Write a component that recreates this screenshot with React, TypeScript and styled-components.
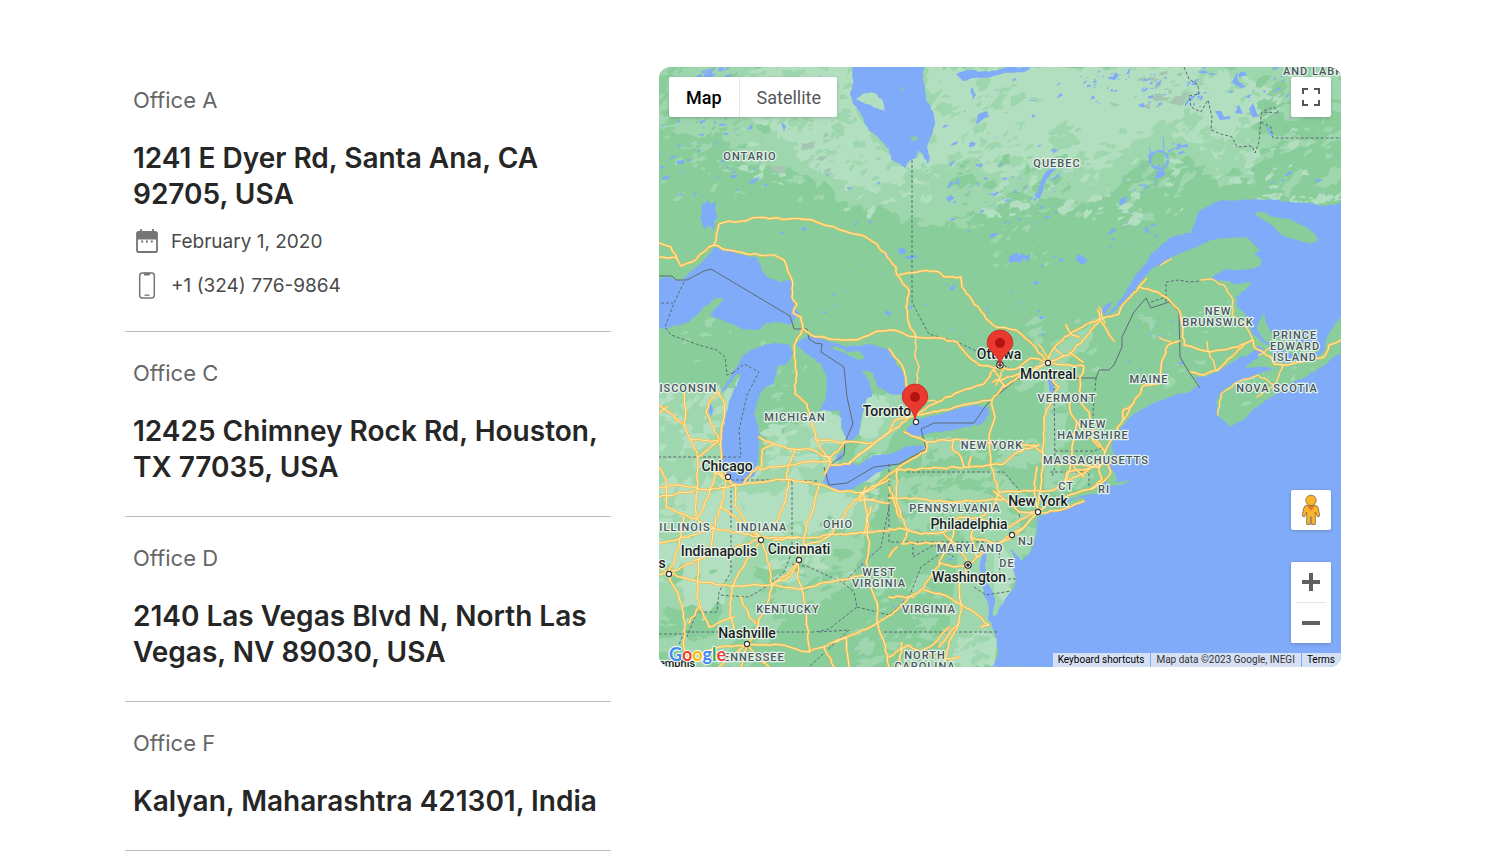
import React from "react";
import styled, { createGlobalStyle } from "styled-components";

const GlobalStyle = createGlobalStyle`
  *, *::before, *::after { box-sizing: border-box; }
  body {
    margin: 0;
    background: #fff;
    font-family: Inter, "Liberation Sans", sans-serif;
    color: #262626;
  }
`;

/* ---------- page layout ---------- */

const Page = styled.main`
  display: grid;
  grid-template-columns: minmax(0, 486fr) minmax(0, 682fr);
  align-items: start;
  gap: 48px;
  padding: 59px 148px 16px 125px;
`;

const OfficeList = styled.ul`
  list-style: none;
  margin: 0;
  padding: 0;
`;

const OfficeItem = styled.li`
  padding: 25px 8px 31px;
  border-bottom: 1px solid #bdbdbd;
`;

const OfficeName = styled.p`
  margin: 0 0 24px;
  font-size: 22px;
  line-height: 32px;
  font-weight: 400;
  color: #666;
`;

const Address = styled.h2`
  margin: 0;
  font-size: 28px;
  line-height: 36px;
  font-weight: 600;
  color: #262626;
`;

const Detail = styled.div`
  display: flex;
  align-items: center;
  gap: 10px;
  height: 28px;
  margin-top: 16px;
  font-size: 19px;
  line-height: 28px;
  color: #4a4a4a;

  svg { flex: none; }
`;

/* ---------- map chrome ---------- */

const MapFrame = styled.section`
  position: relative;
  height: 600px;
  margin-top: 8px;
  overflow: hidden;
  border-radius: 12px;
  background: #80abf8;
  font-family: Roboto, "Liberation Sans", sans-serif;
`;

const MapSvg = styled.svg`
  display: block;
  width: 100%;
  height: 100%;
`;

const Corner = styled.div<{ $side: "left" | "right" }>`
  position: absolute;
  top: 10px;
  ${(p) => p.$side}: 10px;
`;

const TypeSwitch = styled.div`
  display: flex;
  border-radius: 2px;
  background: #fff;
  box-shadow: 0 1px 4px -1px rgba(0, 0, 0, 0.3);
`;

const TypeButton = styled.button<{ $active?: boolean }>`
  height: 40px;
  padding: 2px 17px 0;
  border: 0;
  background: none;
  font: ${(p) => (p.$active ? 500 : 400)} 18px/38px Roboto, sans-serif;
  color: ${(p) => (p.$active ? "#000" : "#565656")};

  & + & {
    padding-right: 16px;
    border-left: 1px solid #e8e8e8;
  }
`;

const SquareButton = styled.button`
  display: flex;
  align-items: center;
  justify-content: center;
  width: 40px;
  height: 40px;
  padding: 0;
  border: 0;
  border-radius: 2px;
  background: #fff;
`;

const RightStack = styled.div`
  position: absolute;
  right: 10px;
  bottom: 24px;
  display: flex;
  flex-direction: column;
  gap: 32px;

  & > * { box-shadow: 0 1px 4px -1px rgba(0, 0, 0, 0.3); }
`;

const ZoomGroup = styled.div`
  display: flex;
  flex-direction: column;
  align-items: center;
  border-radius: 2px;
  background: #fff;
`;

const ZoomDivider = styled.span`
  width: 30px;
  height: 1px;
  background: #e6e6e6;
`;

const Shadowed = styled(SquareButton)`
  box-shadow: 0 1px 4px -1px rgba(0, 0, 0, 0.3);
`;

const Attribution = styled.div`
  position: absolute;
  right: 0;
  bottom: 0;
  display: flex;
  gap: 1px;
  height: 14px;
  font-size: 10px;
  line-height: 14px;
  color: #333;

  & > * {
    padding: 0 6px 0 5px;
    border: 0;
    background: rgba(235, 238, 243, 0.8);
    font: inherit;
    white-space: nowrap;
  }
  & > button, & > a { color: #000; text-decoration: none; }
`;

const GoogleLogo = styled.a`
  position: absolute;
  left: 10px;
  bottom: 1px;
  font: 700 18px/24px Lato, sans-serif;
  text-decoration: none;
  text-shadow: 0 0 1px #fff, 1px 0 1px #fff, -1px 0 1px #fff, 0 1px 1px #fff, 0 -1px 1px #fff;
`;

const Letter = styled.span<{ $color: string }>`
  color: ${(p) => p.$color};
`;

/* ---------- icons ---------- */

const CalendarIcon = () => (
  <svg width="28" height="28" viewBox="0 0 28 28" fill="none" aria-hidden="true">
    <path d="M4 4.5h20v7H4z" fill="#757575" />
    <rect x="4" y="4" width="20" height="20" rx="1.6" stroke="#757575" strokeWidth="1.8" />
    <path d="M8 1v4M20 1v4" stroke="#757575" strokeWidth="1.8" />
    <path d="M8.2 12.4h2v2h-2zM13 12.4h2v2h-2zM17.8 12.4h2v2h-2z" fill="#757575" />
  </svg>
);

const PhoneIcon = () => (
  <svg width="28" height="28" viewBox="0 0 28 28" fill="none" aria-hidden="true">
    <rect x="6.7" y=".9" width="14.6" height="25" rx="2.6" stroke="#757575" strokeWidth="1.5" />
    <path d="M10.5 .7h7l-.8 2.7h-5.4z" fill="#757575" />
    <path d="M11.5 23.2h5" stroke="#757575" strokeWidth="1.3" />
  </svg>
);

const FullscreenIcon = () => (
  <svg width="18" height="18" viewBox="0 0 18 18" aria-hidden="true">
    <path d="M0 0v6h2V2h4V0zm16 0h-4v2h4v4h2V0zm0 16h-4v2h6v-6h-2zM2 12H0v6h6v-2H2z" fill="#565656" />
  </svg>
);

const PlusIcon = () => (
  <svg width="18" height="18" viewBox="0 0 18 18" aria-hidden="true">
    <path d="M18 7h-7V0H7v7H0v4h7v7h4v-7h7z" fill="#606060" />
  </svg>
);

const MinusIcon = () => (
  <svg width="18" height="18" viewBox="0 0 18 18" aria-hidden="true">
    <path d="M0 7h18v4H0z" fill="#606060" />
  </svg>
);

const PegmanIcon = () => (
  <svg width="20" height="32" viewBox="0 0 20 32" aria-hidden="true">
    <path
      d="M6 11.2Q3.4 11.4 2.8 14L1.2 22l2.2.9L5.7 18v12.4h3.7V23h1.2v7.4h3.7V18l2.3 4.9 2.2-.9-1.6-8Q16.6 11.4 14 11.2z"
      fill="#fbb42a"
      stroke="#7a6a42"
      strokeWidth=".8"
    />
    <path d="M5.6 11.3h8.8L10 16.8z" fill="#e07a2b" />
    <circle cx="10" cy="6.4" r="5.2" fill="#fbb42a" stroke="#7a6a42" strokeWidth=".8" />
  </svg>
);

/* ---------- map data, in map units (682 x 600) ---------- */

const GREEN = "#89cd9b";
const MID = "#9ed7ae";
const LIGHT = "#b3dfc1";
const GREY = "#a5c4b2";
const WATER = "#80abf8";

const midLand = [
  "M0 40L20 0H600L682 0V50L620 60 600 85 560 112 530 90 500 85 470 100 452 125 420 138 395 130 360 125 330 145 300 150 280 160 245 152 225 140 190 140 170 118 130 100 90 98 60 70 20 70 0 60z",
  "M0 318L60 320 72 330 62 400 100 405 108 370 160 345 187 375 165 410 205 430 225 430 205 480 190 520 150 540 120 560 90 600 0 600z",
  "M205 330L245 325 250 352 225 385 190 395 205 365z",
  "M232 412L340 402 372 440 350 475 270 470 240 455z",
  "M300 480L380 460 340 550 335 600H240L290 560z",
  "M355 320L388 290 440 250 430 275 405 298 360 325z",
  "M265 372L380 376 385 400 300 390 262 400z",
  "M385 300L410 296 410 400 436 412 405 425 385 420z",
];

const lightLand = [
  "M90 0H195L200 50 232 95 250 104 262 85 274 60 266 20V0H560L590 12 622 22 618 45 596 58 570 72 556 92 540 76 505 66 480 72 455 92 430 118 405 112 400 92 370 100 345 105 315 100 285 105 270 118 240 112 216 120 190 116 150 100 135 80 110 60 90 52 75 30z",
  "M20 415L55 425 70 420 95 450 70 500 60 560 30 560 20 520 10 505 35 470z",
  "M77 425L125 425 135 400 150 420 150 440 115 470 100 470z",
  "M140 350L178 343 184 365 187 375 160 372z",
  "M207 330L228 330 230 350 208 372 200 368z",
  "M0 470L40 480 30 500 0 500z",
  "M335 480L348 485 355 515 345 535 335 525z",
  "M300 570L325 560 338 580 334 600H290z",
  "M130 425L200 435 180 460 150 470z",
  "M62 340L80 310 75 330 66 362z",
];

const atlantic =
  "M682 136L667 139 650 136 615 133 590 133 562 133 552 138 540 144 536 155 532 166 512 170 500 180 492 187 487 197 478 206 468 222 458 238 446 248 452 246 462 238 474 224 488 207 497 199 515 189 530 183 552 173 575 170 590 172 598 180 601 184 595 187 602 192 601 199 594 202 580 203 565 203 555 208 552 213 566 214 580 217 594 214 588 221 577 229 578 240 586 247 590 258 594 267 601 273 612 281 614 288 625 296 640 294 655 292 666 282 668 270 675 258 682 250V287L674 290 666 298 646 310 628 318 612 330 598 340 586 352 574 358 571 360 567 355 560 350 558 345 558 333 563 325 575 317 592 310 605 304 618 302 604 300 586 300 600 289 606 283 600 279 590 287 572 296 560 304 548 309 536 310 541 318 532 324 516 328 502 333 488 340 473 348 464 358 456 370 452 380 455 386 449 392 448 400 456 406 457 415 466 415 470 411 471 406 467 403 471 407 470 414 462 418 452 419 446 414 446 424 437 427 428 428 412 432 400 433 385 441 428 430 421 436 404 441 384 448 378 450 378 463 375 478 370 487 362 494 355 485 351 481 355 492 354 502 357 512 355 522 348 530 342 538 338 548 334 549 336 535 334 525 328 515 326 500 328 488 324 484 321 498 322 514 325 528 330 540 329 550 334 562 338 573 339 587 333 600H682z";

const lakes = [
  "M193 0L194 12 193 22 191 28 195 38 201 45 205 55 210 64 218 69 225 76 230 82 232 92 236 95 246 101 250 94 257 91 259 83 264 88 268 97 271 90 268 80 273 68 276 58 275 50 272 42 267 30 266 20 264 12 265 0z",
  "M0 212L10 210 22 214 30 206 40 198 48 190 56 181 70 183 83 188 98 191 102 200 108 210 120 215 133 213 134 233 140 248 134 256 130 258 120 255 108 256 98 263 83 262 75 258 60 252 50 248 57 240 66 232 58 231 48 238 38 248 28 256 18 258 5 262 0 260z",
  "M60 328L67 318 72 309 80 296 84 288 100 279 118 276 130 278 134 287 128 297 118 300 115 316 106 320 100 330 95 347 100 360 100 373 98 400 95 409 85 416 75 417 68 408 63 398 63 367 67 347 72 330 82 307 78 307 67 322z",
  "M136 277L147 287 163 297 167 310 167 333 160 343 180 343 185 367 187 375 193 373 200 367 203 347 207 333 213 330 210 313 203 303 213 305 217 317 230 327 243 328 247 323 245 307 237 297 230 283 213 277 187 280 163 272 152 267z",
  "M178 388L184 384 184 392 177 394z",
  "M170 400L190 394 200 398 215 388 230 387 245 380 262 378 266 380 258 386 240 396 225 402 210 412 195 422 180 424 170 420 163 415 168 405z",
  "M247 365L255 352 280 348 303 340 315 338 330 340 330 347 323 357 297 362 263 368 248 369z",
  "M42 136L45 138 48 133 52 137 57 135 56 143 59 150 55 154 55 163 50 158 45 162 41 152 43 145z",
  "M49 339l3-2 2 4-1 8-3-3z",
  "M297 7L310 3 330 5 345 1 372 0 365 5 345 6 335 9 315 11 304 14z",
  "M314 20L317 28 313 34 312 22zM319 47L328 44 330 50 322 54 317 58z",
  "M376 130L382 114 388 104 400 98 391 108 384 119 381 132zM390 116L405 101 399 110z",
  "M418 187l6 2 5 5-6 4-6-5zM239 184a4 3 0 1 0 8 0 4 3 0 1 0-8 0M245 190l9-2 5 2-10 2z",
  "M350 190l8-5 2 4 3-3 3 3 6-2-3 8-4-4-4 5-5-2-6 2z",
  "M573 15l5-10 1 9 8 6-5 1-7-4z M556 44l6 0 3 6 6-1 0 3-10 1z M576 46l4-8 4 9zM590 42l4-6 5 13-5 2z",
  "M122 55l5 4-2 6zM668 250l10-14 4-4v6l-10 14z",
  "M390 301l4 10 1 22-3 0-3-20zM440 245l8-8 6-2-8 12z",
  "M606 58l5 4 3 8-2-1z",
];

const islands = [
  "M197 32L205 26 215 26 223 32 227 44 218 41 207 37z",
  "M241 22l3-3 0 5zM251 71l7-3 0 5-5 1z",
  "M595 147L603 145 612 149 630 152 645 159 655 166 659 173 653 176 635 172 620 166 614 159z",
  "M163 279L170 281 178 279 190 285 200 284 206 290 202 293 190 289 180 284z",
  "M598 262l2-7 5-9 2 10 4 8 6 6 14 2 14 4 12 2 4 6-14 5-18-3-14-7-10-6z",
];

const roads = [
  "M55 178L58 165 60 157 70 154 87 154 93 151 115 151 153 153 170 159 195 167 205 169 218 177 228 190 237 200 238 208 250 223 247 240 250 257 257 270",
  "M0 176L12 180 17 188 18 192 22 199 33 195 45 185 50 180 55 178 68 183 80 185 100 188 115 188 125 193 128 200 133 213 133 230 138 237 134 246 142 250 144 262 152 268 170 272 197 273 220 264 230 263 257 270 280 271 298 275 310 290 320 298 337 301 357 302 372 291 388 295",
  "M0 190L18 191",
  "M240 208L263 204 280 205 285 210 302 210 303 220 313 233 327 252 337 260 357 263 373 277 383 288 388 295",
  "M388 295L397 278 413 265 440 252 460 247 462 240 480 220 487 212",
  "M388 295L410 288 427 270 441 253 455 274M439 243L441 253M407 258L413 268 420 270",
  "M480 220L499 225 510 233 520 243 524 260 525 278 542 283 552 285 579 280 594 273 595 280 612 290 615 297 624 298 639 295 665 290 670 278 682 273",
  "M532 305L545 308 559 303 569 292 585 278",
  "M520 274L509 278 502 300 499 317 485 318 474 337 464 353 452 373 446 385 440 400M474 337L464 343 464 353",
  "M250 350L283 343 310 337 333 333 343 320 363 307 387 297",
  "M255 348L275 337 300 325 325 317 335 302M335 302L345 320M334 315L365 306 385 297",
  "M388 295L405 298 425 299 424 306 421 310 422 335 430 345 435 370 446 385M410 285L424 295",
  "M230 282L245 303 247 315 248 335 250 350",
  "M250 350L240 360 228 367 213 378 200 388 190 397 172 398M250 350L236 353 230 365 204 385 190 396",
  "M245 365L260 371 268 375 298 372 320 375 350 377 375 378 383 385 386 396 420 397 440 400",
  "M268 375L267 385 253 392 238 402 225 412 205 425",
  "M333 333L336 350 331 365 330 378 332 400 340 425 335 440 320 452",
  "M295 372L293 382 302 390 305 400M380 378L358 385 345 397 310 400 280 401 238 403",
  "M393 312L400 320 392 335 385 350 384 380 384 400 380 430 378 445",
  "M411 335L412 347 418 355 413 380 411 400 405 420M418 355L440 380",
  "M143 263L135 280 137 303 136 327 148 337 157 373 172 395",
  "M100 370L115 377 133 382 150 382 172 392M157 373L187 375 213 376M102 400L103 383 115 376M100 402L130 398 150 395 172 395 165 408M136 383L129 398 128 412M165 389L172 390 187 374",
  "M60 325L66 337 62 373 62 395 68 410M60 325L50 335 47 345 52 357 60 372",
  "M0 338L10 345 25 358 31 372 38 385 39 400 38 425 37 450M31 372L60 374 39 390M26 325L26 358M0 346L8 340",
  "M60 400L62 410 75 418 100 415 130 412 160 417 178 424 205 425 230 412",
  "M60 402L67 412 62 440 54 461 50 490M58 396L55 412 45 440 38 452M0 420L20 418 50 423 75 418M0 400L7 412 7 440 25 447 38 452",
  "M76 417L77 440 90 460 102 472M55 405L72 414M85 416L98 400",
  "M38 452L54 461 102 470 150 471 173 467 205 466 230 464M0 476L20 472 54 461",
  "M102 472L70 482 40 492 10 506 0 508M0 500L10 506 20 480 25 450",
  "M10 506L40 515 75 519 112 518 138 522 160 517 190 512 205 508",
  "M102 472L108 490 113 518 108 540 100 552 93 572 88 577M102 472L90 490 80 505 73 520 71 545 75 562M82 530L90 550 97 556",
  "M130 412L126 435 117 455M160 417L155 440 148 455 145 478 140 493 138 510 143 523 147 545 150 585M140 493L130 506 113 518",
  "M205 425L190 440 173 467 160 475 145 478M205 425L208 450 210 480 207 495 212 520 218 535 218 555 225 575 230 600M205 432L230 436M207 420L200 434 215 432",
  "M88 577L60 580 30 590 0 598M88 577L120 578 150 585 175 575 200 565 225 552 235 545 250 530 262 523 275 505 290 480 297 460",
  "M10 510L20 530 26 555 25 580 30 595M40 492L38 530 45 550 50 560 75 550M88 577L82 600M88 577L98 590 110 600M60 600L75 588 88 577M165 580L175 600M175 575L187 570 190 600M40 540L30 556",
  "M230 431L260 432 290 435 330 433 345 432 360 445 378 445M230 462L245 462 262 467 285 465 300 450 320 452 350 460 380 443",
  "M238 403L237 430 242 450 248 462M230 420L240 450M250 462L243 477 255 476 300 477",
  "M380 443L365 460 352 468 335 478 318 490 309 498 300 520 302 537 300 555 290 575 285 600M378 445L362 463 350 472 330 480",
  "M302 537L315 545 330 558 322 560M265 523L285 528 302 537M309 498L295 500 280 496M230 530L255 530M312 470L318 490M285 467L300 480 309 498M318 455L312 470 335 476",
  "M230 590L250 578 262 585 275 577 290 560M243 576L240 600M262 585L290 592 300 590M300 555L280 580",
  "M380 443L400 432 420 425 432 422 445 414 452 405 447 395M405 420L408 405 440 400 450 393M370 424L390 424 408 415 430 402M440 400L443 412 432 422",
  "M383 446L405 442 425 434M378 400L375 424 378 440M340 425L370 424M345 432L335 424M310 400L312 390M238 480L230 490M415 400L425 410M430 395L450 397",
  "M112 518L130 510 140 493M0 430L35 424M115 473L140 470M62 440L102 470M205 466L212 440",
];

const minorRoads = [
  "M542 213L552 212 565 218 574 233 573 248 587 260 594 273",
  "M624 298L617 318 599 308 579 315 562 327 559 348M550 285L557 303M612 280L600 288M617 318L598 330",
  "M257 270L256 290 260 300 257 320 265 333 278 335M548 275L549 284M502 198L512 192",
  "M500 270L512 275M380 278L388 290M405 290L395 280M345 302L337 318M440 240L446 256",
];

const borders =
  "M0 209L13 209 17 213 28 213 45 204 52 202 131 249 135 262 148 262 150 272 156 276 163 277 162 285 185 300 188 330 194 357 186 375 185 388 172 397M165 400L170 418 188 416 215 400 240 397 267 382 262 362 275 356 315 356 328 337 358 312 388 311 437 311 440 303 450 303 455 298 463 280 463 270 475 245 487 231 492 241 510 235 520 245 521 290 530 305 541 321";

const stateLines = [
  "M253 93V235L258 245 270 267 298 275 330 290 350 301",
  "M25 215L15 236 6 260 12 268 40 278 58 283 66 290 68 308 74 306M2 236H14M74 306L85 297 100 305 88 328 80 363 82 390H0",
  "M72 418V505L60 525 58 545 38 545 28 570M72 413H130M133 415V485L125 505 110 518 90 530 60 528M130 414H160",
  "M133 497L150 500 165 507 183 515 195 525 198 540 170 562 156 565H25M230 440L222 480 200 500 185 515M198 540L230 548 250 530 262 500 290 480",
  "M230 397V475H340M248 405H345L360 423 358 440 362 455M225 565H338M25 565L20 578",
  "M437 311L434 345 435 370M395 311L396 400 393 410M396 384H435L445 380M391 405H430V425M254 475V490L275 478 295 490",
  "M340 475L341 512H357M315 520L327 528 352 524M160 565L190 563 150 600M0 567H25",
  "M525 0L530 12 539 18 540 27 530 29 532 40 542 45 549 33 553 50 552 63 562 67 573 70 578 80 593 79 596 86 600 75 602 50 603 45 620 46 615 40 604 44M602 55L612 60 614 71H682",
  "M507 235V215L520 213 530 215 542 214M492 235L507 230",
];

type Cluster = [number, number, number, number, number, number, string];

/* x, y, width, height, count, blob size, colour */
const clusters: Cluster[] = [
  [0, 0, 200, 100, 100, 7, MID],
  [0, 0, 110, 90, 60, 7, GREEN],
  [0, 90, 230, 44, 40, 5, MID],
  [80, 0, 120, 120, 40, 6, LIGHT],
  [110, 50, 120, 70, 34, 6, MID],
  [180, 90, 90, 55, 34, 7, LIGHT],
  [230, 95, 90, 65, 50, 8, MID],
  [268, 10, 110, 100, 44, 8, MID],
  [290, 60, 130, 90, 60, 8, MID],
  [300, 90, 110, 80, 40, 8, GREEN],
  [330, 80, 120, 70, 36, 7, LIGHT],
  [400, 60, 130, 60, 44, 8, MID],
  [420, 80, 110, 80, 40, 7, MID],
  [440, 85, 100, 70, 24, 6, LIGHT],
  [500, 0, 180, 80, 66, 8, MID],
  [540, 60, 140, 60, 50, 9, MID],
  [540, 60, 120, 60, 24, 6, LIGHT],
  [600, 10, 82, 60, 34, 10, GREEN],
  [450, 5, 80, 35, 20, 6, GREY],
  [100, 50, 80, 60, 8, 6, GREY],
  [580, 20, 50, 40, 8, 5, GREY],
  [600, 128, 80, 8, 24, 5, LIGHT],
  [330, 160, 60, 40, 14, 6, MID],
  [0, 320, 60, 90, 30, 9, LIGHT],
  [100, 340, 70, 60, 18, 9, LIGHT],
  [0, 400, 220, 120, 60, 11, LIGHT],
  [0, 500, 230, 100, 55, 11, GREEN],
  [140, 450, 150, 140, 75, 9, GREEN],
  [190, 520, 140, 80, 45, 8, MID],
  [240, 405, 130, 60, 42, 9, GREEN],
  [290, 480, 40, 110, 24, 7, MID],
  [270, 375, 110, 25, 24, 6, GREEN],
  [395, 310, 45, 110, 30, 6, GREEN],
  [360, 250, 80, 60, 20, 7, MID],
  [470, 230, 110, 90, 16, 5, MID],
  [570, 300, 90, 40, 10, 5, MID],
  [90, 280, 70, 70, 10, 7, MID],
  [0, 230, 120, 80, 14, 7, MID],
];

const pondClusters: Cluster[] = [
  [0, 40, 100, 90, 46, 3, WATER],
  [60, 90, 160, 40, 12, 2, WATER],
  [275, 10, 130, 90, 18, 3, WATER],
  [290, 110, 110, 60, 44, 3, WATER],
  [420, 0, 130, 40, 50, 3, WATER],
  [540, 0, 90, 40, 18, 3, WATER],
  [450, 110, 50, 70, 26, 3, WATER],
  [480, 70, 60, 40, 12, 3, WATER],
  [590, 80, 90, 50, 14, 2, WATER],
  [120, 150, 130, 100, 18, 2, WATER],
  [250, 190, 170, 90, 40, 2, WATER],
  [470, 250, 60, 60, 18, 2, WATER],
  [10, 0, 60, 14, 12, 4, WATER],
  [200, 480, 100, 80, 12, 2, WATER],
];

/* Small seeded generator, so that the terrain is the same on each render. */
const makeRandom = (seed: number) => () => {
  seed = (seed * 1664525 + 1013904223) % 4294967296;
  return seed / 4294967296;
};

const blobs = ([x, y, w, h, count, size]: Cluster, seed: number) => {
  const rnd = makeRandom(seed * 7919 + 17);
  let d = "";
  for (let i = 0; i < count; i++) {
    const cx = x + rnd() * w;
    const cy = y + rnd() * h;
    const r = size * (0.3 + rnd() * rnd() * 1.3);
    const tilt = -1 + rnd() * 1.2;
    const squash = 0.35 + rnd() * 0.5;
    for (let k = 0; k < 11; k++) {
      const a = (k / 11) * Math.PI * 2;
      const q = r * (0.4 + rnd() * 0.9);
      const px = Math.cos(a) * q * 1.3;
      const py = Math.sin(a) * q * squash;
      const qx = cx + px * Math.cos(tilt) - py * Math.sin(tilt);
      const qy = cy + px * Math.sin(tilt) + py * Math.cos(tilt);
      d += `${k ? "L" : "M"}${qx.toFixed(1)} ${qy.toFixed(1)}`;
    }
    d += "z";
  }
  return d;
};

const roughen = (d: string, step: number, amount: number) => {
  if (/[a-y]/.test(d)) return d;
  const rnd = makeRandom(d.length * 31 + 7);
  const tokens = d.match(/[MLHVz]|-?[\d.]+/g) ?? [];
  let out = "";
  let cmd = "M";
  let x = 0;
  let y = 0;
  for (let i = 0; i < tokens.length; ) {
    if (/[MLHVz]/.test(tokens[i])) {
      cmd = tokens[i++];
      if (cmd === "z") out += "z";
      continue;
    }
    const nx = cmd === "V" ? x : Number(tokens[i++]);
    const ny = cmd === "H" ? y : Number(tokens[i++]);
    if (cmd === "M") {
      out += `M${nx} ${ny}`;
      cmd = "L";
    } else {
      const n = Math.floor(Math.hypot(nx - x, ny - y) / step);
      for (let k = 1; k < n; k++) {
        const px = x + ((nx - x) * k) / n + (rnd() - 0.5) * amount;
        const py = y + ((ny - y) * k) / n + (rnd() - 0.5) * amount;
        out += `L${px.toFixed(1)} ${py.toFixed(1)}`;
      }
      out += `L${nx} ${ny}`;
    }
    x = nx;
    y = ny;
  }
  return out;
};

const terrain = clusters.map((c, i) => ({ d: blobs(c, i + 1), fill: c[6] }));
const ponds = pondClusters.map((c, i) => blobs(c, i + 101)).join("");
const midShapes = midLand.map((d) => roughen(d, 5, 9));
const lightShapes = lightLand.map((d) => roughen(d, 5, 9));
const seaShape = roughen(atlantic, 3, 2);
const lakeShapes = lakes.map((d) => roughen(d, 3, 2));
const islandShapes = islands.map((d) => roughen(d, 3, 2));
const roadLines = roads.map((d) => roughen(d, 4, 2));
const minorLines = minorRoads.map((d) => roughen(d, 4, 2));

const regions: [string, number, number][] = [
  ["ONTARIO", 91, 93],
  ["QUEBEC", 398, 100],
  ["AND LABR", 654, 8],
  ["NEW", 559, 248],
  ["BRUNSWICK", 559, 259],
  ["PRINCE", 636, 272],
  ["EDWARD", 636, 283],
  ["ISLAND", 636, 294],
  ["NOVA SCOTIA", 618, 325],
  ["MAINE", 490, 316],
  ["VERMONT", 408, 335],
  ["NEW", 434, 361],
  ["HAMPSHIRE", 434, 372],
  ["MASSACHUSETTS", 437, 397],
  ["NEW YORK", 333, 382],
  ["CT", 407, 423],
  ["RI", 445, 426],
  ["PENNSYLVANIA", 296, 445],
  ["NJ", 367, 478],
  ["MARYLAND", 311, 485],
  ["DE", 348, 500],
  ["WEST", 220, 509],
  ["VIRGINIA", 220, 520],
  ["VIRGINIA", 270, 546],
  ["NORTH", 266, 592],
  ["CAROLINA", 266, 603],
  ["KENTUCKY", 129, 546],
  ["TENNESSEE", 91, 594],
  ["OHIO", 179, 461],
  ["INDIANA", 103, 464],
  ["ILLINOIS", 26, 464],
  ["WISCONSIN", 24, 325],
  ["MICHIGAN", 136, 354],
];

const cities: [string, number, number][] = [
  ["Ottawa", 340, 292],
  ["Montreal", 389, 312],
  ["Toronto", 228, 349],
  ["Chicago", 68, 404],
  ["New York", 379, 439],
  ["Philadelphia", 310, 462],
  ["Washington", 310, 515],
  ["Indianapolis", 60, 489],
  ["Cincinnati", 140, 487],
  ["Nashville", 88, 571],
];

const cityDots: [number, number][] = [
  [389, 296], [257, 355], [69, 410], [379, 445], [353, 468],
  [102, 473], [140, 493], [10, 507], [88, 577],
];

const capitals: [number, number][] = [[341, 298], [309, 498]];
const pins: [number, number][] = [[341, 299], [256, 353]];

const OfficeMap = () => (
  <MapSvg viewBox="0 0 682 600" preserveAspectRatio="xMidYMid slice" role="img" aria-label="Map of offices">
    <rect width="682" height="600" fill={GREEN} />
    {midShapes.map((d) => <path key={d} d={d} fill={MID} />)}
    {lightShapes.map((d) => <path key={d} d={d} fill={LIGHT} />)}
    {terrain.map((t, i) => <path key={i} d={t.d} fill={t.fill} />)}
    <path d={ponds} fill={WATER} />
    <path d={seaShape} fill={WATER} />
    {lakeShapes.map((d) => <path key={d} d={d} fill={WATER} />)}
    <circle cx="500" cy="93" r="9" fill="none" stroke={WATER} strokeWidth="2.4" strokeDasharray="7 1" />
    <path d="M499 103l-3 15M505 84l-1-14M492 86l-2-6" stroke={WATER} fill="none" />
    {islandShapes.map((d, i) => <path key={d} d={d} fill={i === 0 ? LIGHT : GREEN} />)}

    <g fill="none" stroke="#5c6b75" strokeWidth="1">
      <path d={borders} />
      {stateLines.map((d) => <path key={d} d={d} strokeDasharray="3 2" />)}
    </g>

    <g fill="none" strokeLinejoin="round" strokeLinecap="round">
      {minorLines.map((d) => <path key={d} d={d} stroke="#f9c04f" strokeWidth="1.8" />)}
      {roadLines.map((d) => <path key={d} d={d} stroke="#fbbc45" strokeWidth="2.5" />)}
      {roadLines.map((d) => <path key={d + "i"} d={d} stroke="#ffefbd" strokeWidth="1" />)}
      {minorLines.map((d) => <path key={d + "i"} d={d} stroke="#fff0c0" strokeWidth=".7" />)}
    </g>

    <g fill="#fff" stroke="#333" strokeWidth="1.1">
      {cityDots.map(([x, y]) => <circle key={`${x}-${y}`} cx={x} cy={y} r="2.6" />)}
    </g>
    {capitals.map(([x, y]) => (
      <g key={x}>
        <circle cx={x} cy={y} r="3.2" fill="#fff" stroke="#222" strokeWidth="1.1" />
        <circle cx={x} cy={y} r="1.8" fill="#222" />
      </g>
    ))}

    <g
      fontFamily="Roboto, sans-serif"
      fontSize="11"
      fontWeight="500"
      letterSpacing="1"
      textAnchor="middle"
      fill="#49565c"
      stroke="#e6f4ea"
      strokeWidth="2.4"
      strokeLinejoin="round"
      paintOrder="stroke"
    >
      {regions.map(([label, x, y]) => <text key={`${label}${y}`} x={x} y={y}>{label}</text>)}
    </g>
    <g
      fontFamily="Roboto, sans-serif"
      fontSize="14"
      fontWeight="500"
      textAnchor="middle"
      fill="#1b1f22"
      stroke="#e6f4ea"
      strokeWidth="2.4"
      strokeLinejoin="round"
      paintOrder="stroke"
    >
      {cities.map(([label, x, y]) => <text key={label} x={x} y={y}>{label}</text>)}
      <text x="3" y="501">s</text>
      <text x="18" y="600" fontSize="11">emphis</text>
    </g>

    {pins.map(([x, y]) => (
      <g key={x} transform={`translate(${x} ${y})`}>
        <path
          d="M0 0C-1.2-7.5-4-9.6-6.6-12.6-10-16-12.8-18.6-12.8-23.2A12.8 12.8 0 0 1 12.8-23.2C12.8-18.6 10-16 6.6-12.6 4-9.6 1.2-7.5 0 0z"
          fill="#ea3a30"
          stroke="#c5221f"
          strokeWidth=".8"
        />
        <circle cx="0" cy="-23" r="5" fill="#b31412" />
      </g>
    ))}
  </MapSvg>
);

/* ---------- page ---------- */

interface Office {
  name: string;
  address: string;
  date?: string;
  phone?: string;
}

const offices: Office[] = [
  { name: "Office A", address: "1241 E Dyer Rd, Santa Ana, CA 92705, USA", date: "February 1, 2020", phone: "+1 (324) 776-9864" },
  { name: "Office C", address: "12425 Chimney Rock Rd, Houston, TX 77035, USA" },
  { name: "Office D", address: "2140 Las Vegas Blvd N, North Las Vegas, NV 89030, USA" },
  { name: "Office F", address: "Kalyan, Maharashtra 421301, India" },
];

const logo: [string, string][] = [
  ["G", "#4285f4"], ["o", "#ea4335"], ["o", "#fbbc05"], ["g", "#4285f4"], ["l", "#34a853"], ["e", "#ea4335"],
];

export default function App() {
  return (
    <>
      <GlobalStyle />
      <Page>
        <OfficeList>
          {offices.map((o) => (
            <OfficeItem key={o.name}>
              <OfficeName>{o.name}</OfficeName>
              <Address>{o.address}</Address>
              {o.date && <Detail><CalendarIcon />{o.date}</Detail>}
              {o.phone && <Detail><PhoneIcon />{o.phone}</Detail>}
            </OfficeItem>
          ))}
        </OfficeList>
        <MapFrame>
          <OfficeMap />
          <Corner $side="left">
            <TypeSwitch>
              <TypeButton type="button" $active>Map</TypeButton>
              <TypeButton type="button">Satellite</TypeButton>
            </TypeSwitch>
          </Corner>
          <Corner $side="right">
            <Shadowed type="button" aria-label="Toggle fullscreen view"><FullscreenIcon /></Shadowed>
          </Corner>
          <RightStack>
            <SquareButton type="button" aria-label="Open Street View"><PegmanIcon /></SquareButton>
            <ZoomGroup>
              <SquareButton type="button" aria-label="Zoom in"><PlusIcon /></SquareButton>
              <ZoomDivider />
              <SquareButton type="button" aria-label="Zoom out"><MinusIcon /></SquareButton>
            </ZoomGroup>
          </RightStack>
          <GoogleLogo href="#google" aria-label="Google">
            {logo.map(([c, color], i) => <Letter key={i} $color={color}>{c}</Letter>)}
          </GoogleLogo>
          <Attribution>
            <button type="button">Keyboard shortcuts</button>
            <span>Map data ©2023 Google, INEGI</span>
            <a href="#terms">Terms</a>
          </Attribution>
        </MapFrame>
      </Page>
    </>
  );
}
